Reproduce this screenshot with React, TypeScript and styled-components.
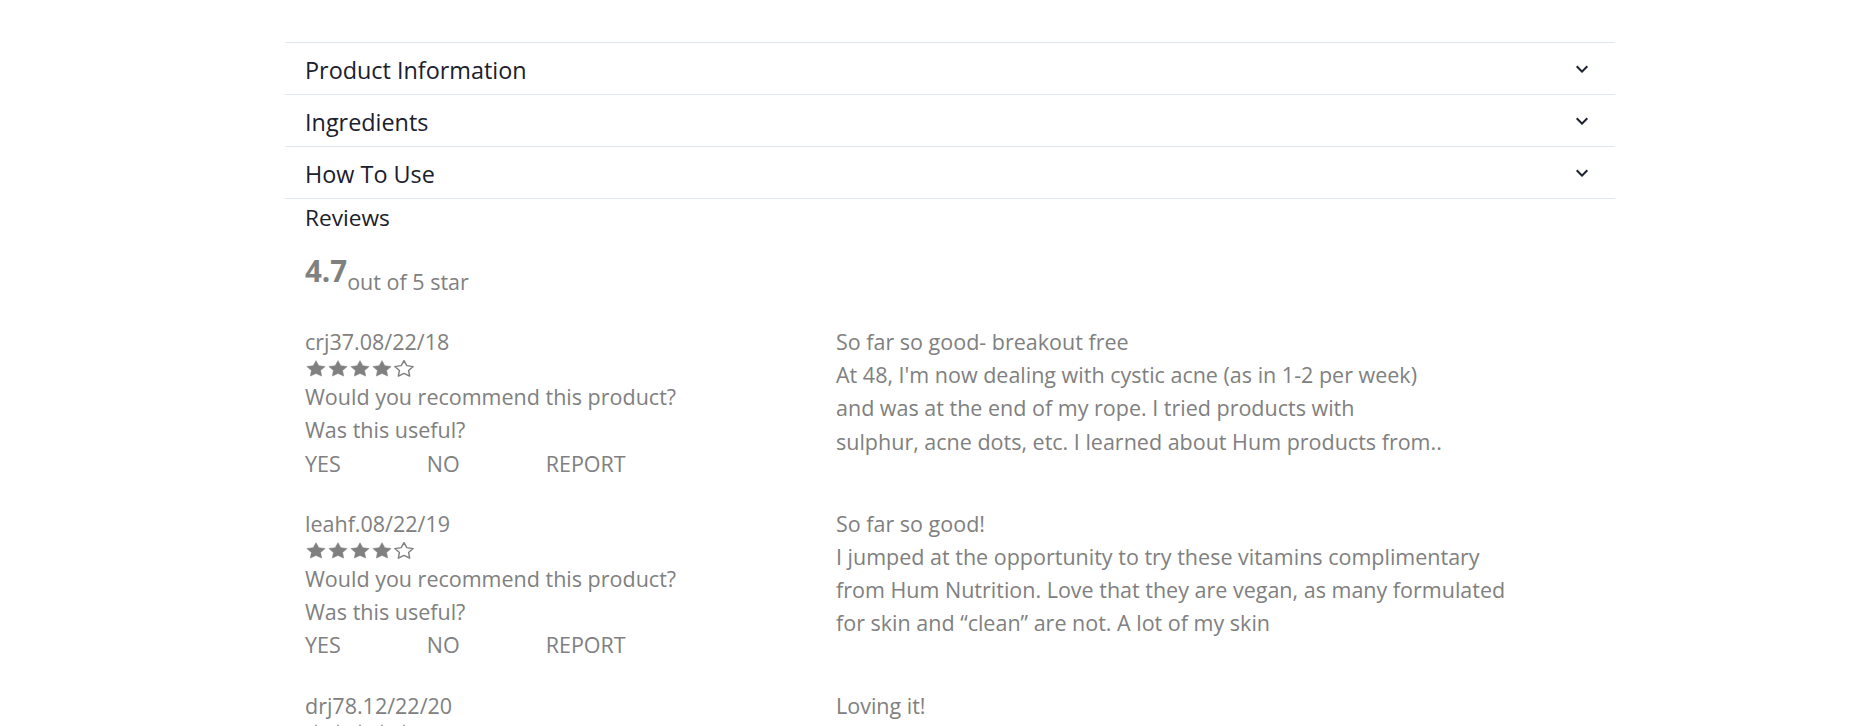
import React from "react";
import styled, { createGlobalStyle } from "styled-components";

const GlobalStyle = createGlobalStyle`
  html, body {
    margin: 0;
    padding: 0;
    background: #ffffff;
  }
  body {
    font-family: "Open Sans", "Noto Sans", sans-serif;
    color: #1a202c;
  }
  * { box-sizing: border-box; }
`;

const Page = styled.div`
  padding: 42px 0 0 285px;
  width: 1615px;
`;

const Accordion = styled.div`
  display: flex;
  flex-direction: column;
`;

const Item = styled.div`
  border-top: 1px solid #e2e8f0;
  &:last-child {
    border-bottom: 1px solid #e2e8f0;
  }
`;

const ItemButton = styled.button`
  display: flex;
  align-items: center;
  justify-content: space-between;
  width: 100%;
  height: 51px;
  padding: 2px 21px 0 20px;
  border: none;
  background: transparent;
  font-family: inherit;
  font-size: 23.4px;
  color: #1a202c;
  cursor: pointer;
  text-align: left;
`;

const Chevron = styled.svg`
  width: 24px;
  height: 24px;
  flex: none;
  margin-top: -2px;
  fill: #1a202c;
`;

const Reviews = styled.section`
  padding: 2px 20px 0 20px;
`;

const Heading = styled.h2`
  margin: 0;
  font-size: 22.7px;
  font-weight: 400;
  line-height: 34px;
  color: #1a202c;
`;

const Rating = styled.div`
  margin-top: 16px;
  height: 74px;
  color: #808080;
  line-height: 40px;
`;

const Score = styled.span`
  font-size: 29.5px;
  font-weight: 700;
`;

const Suffix = styled.span`
  font-size: 21.5px;
  vertical-align: -8px;
`;

const ReviewList = styled.div`
  display: flex;
  flex-direction: column;
  gap: 27px;
`;

const ReviewRow = styled.article`
  display: grid;
  grid-template-columns: 531px 1fr;
  color: #808080;
  font-size: 21.5px;
  line-height: 33.2px;
`;

const Meta = styled.div`
  display: flex;
  flex-direction: column;
`;

const Line = styled.div`
  white-space: nowrap;
`;

const Stars = styled.div`
  display: flex;
  height: 22px;
  align-items: center;
`;

const StarIcon = styled.svg<{ $filled: boolean }>`
  width: 22px;
  height: 19.5px;
  fill: ${(p) => (p.$filled ? "#808080" : "none")};
  stroke: #808080;
  stroke-width: ${(p) => (p.$filled ? 0.6 : 1.6)};
  stroke-linejoin: round;
`;

const Actions = styled.div`
  display: flex;
  gap: 86px;
`;

const Action = styled.span`
  cursor: pointer;
`;

const Body = styled.div`
  display: flex;
  flex-direction: column;
`;

const Title = styled.div``;

const Text = styled.div`
  white-space: pre-line;
`;

const STAR_PATH =
  "M12 2l3.09 6.26L22 9.27l-5 4.87 1.18 6.88L12 17.77l-6.18 3.25L7 14.14 2 9.27l6.91-1.01L12 2z";

const StarRow: React.FC<{ value: number }> = ({ value }) => (
  <Stars>
    {[0, 1, 2, 3, 4].map((i) => (
      <StarIcon
        key={i}
        $filled={i < value}
        viewBox="0 0 24 24"
        preserveAspectRatio="none"
      >
        <path d={STAR_PATH} />
      </StarIcon>
    ))}
  </Stars>
);

const sections = ["Product Information", "Ingredients", "How To Use"];

const reviews = [
  {
    author: "crj37.08/22/18",
    stars: 4,
    title: "So far so good- breakout free",
    text:
      "At 48, I'm now dealing with cystic acne (as in 1-2 per week)\nand was at the end of my rope. I tried products with\nsulphur, acne dots, etc. I learned about Hum products from..",
  },
  {
    author: "leahf.08/22/19",
    stars: 4,
    title: "So far so good!",
    text:
      "I jumped at the opportunity to try these vitamins complimentary\nfrom Hum Nutrition. Love that they are vegan, as many formulated\nfor skin and \u201Cclean\u201D are not. A lot of my skin",
  },
  {
    author: "drj78.12/22/20",
    stars: 5,
    title: "Loving it!",
    text: "These have made a real difference in my skin in just a few weeks.",
  },
];

export default function App() {
  return (
    <>
      <GlobalStyle />
      <Page>
        <Accordion>
          {sections.map((s) => (
            <Item key={s}>
              <ItemButton type="button">
                <span>{s}</span>
                <Chevron viewBox="0 0 24 24">
                  <path d="M16.59 8.59L12 13.17 7.41 8.59 6 10l6 6 6-6z" />
                </Chevron>
              </ItemButton>
            </Item>
          ))}
        </Accordion>
        <Reviews>
          <Heading>Reviews</Heading>
          <Rating>
            <Score>4.7</Score>
            <Suffix>out of 5 star</Suffix>
          </Rating>
          <ReviewList>
            {reviews.map((r) => (
              <ReviewRow key={r.author}>
                <Meta>
                  <Line>{r.author}</Line>
                  <StarRow value={r.stars} />
                  <Line>Would you recommend this product?</Line>
                  <Line>Was this useful?</Line>
                  <Actions>
                    <Action>YES</Action>
                    <Action>NO</Action>
                    <Action>REPORT</Action>
                  </Actions>
                </Meta>
                <Body>
                  <Title>{r.title}</Title>
                  <Text>{r.text}</Text>
                </Body>
              </ReviewRow>
            ))}
          </ReviewList>
        </Reviews>
      </Page>
    </>
  );
}
